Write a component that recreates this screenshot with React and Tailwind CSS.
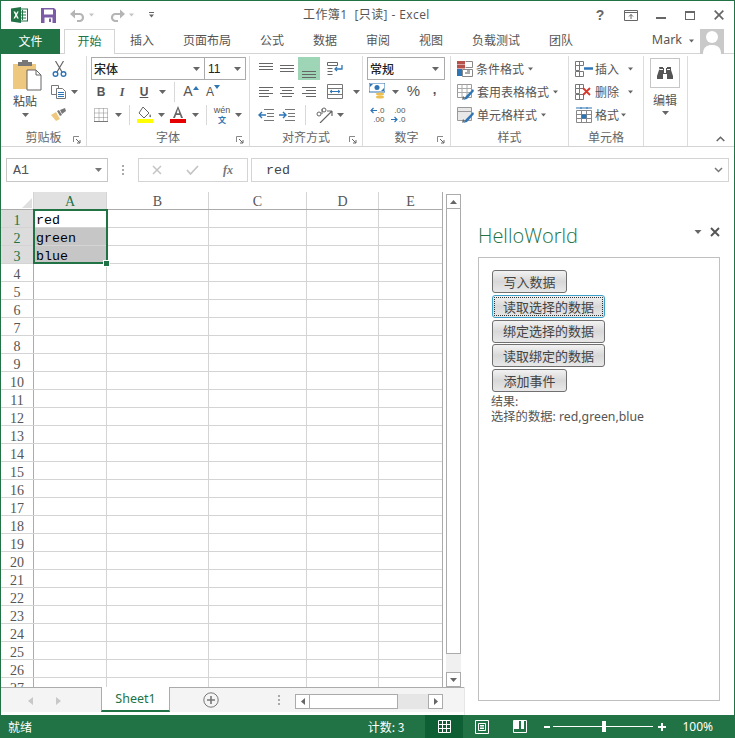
import React from "react";

const G = "#217346";
const Caret = ({ c = "#666", s = 7 }) => (
  <svg width={s} height="4" viewBox="0 0 7 4" className="shrink-0"><path d="M0 0h7L3.5 4z" fill={c} /></svg>
);
const Slot = ({ w, children, className = "" }) => (
  <div style={{ width: w }} className={`h-full flex items-center justify-center shrink-0 ${className}`}>{children}</div>
);
const Sep = () => <div className="w-px h-[20px] bg-[#d8d8d8] shrink-0" />;
const Lines = ({ rows, w = 16, h = 14, c = "#666" }) => (
  <svg width={w} height={h} viewBox={`0 0 ${w} ${h}`}>
    {rows.map(([x, y, l], i) => <rect key={i} x={x} y={y} width={l} height="1" fill={c} />)}
  </svg>
);
const Launcher = () => (
  <svg width="8" height="8" viewBox="0 0 8 8"><path d="M.5 6V.5H6" fill="none" stroke="#888" /><path d="M3 3l4 4M7 4v3H4" fill="none" stroke="#666" /></svg>
);
const Group = ({ w, label, launcher, children, border = true }) => (
  <div style={{ width: w }} className={`h-full relative shrink-0 flex flex-col ${border ? "border-r border-[#dcdcdc]" : ""}`}>
    <div className="h-[72px]">{children}</div>
    <div className="flex-1 flex items-center justify-center text-[12px] text-[#666]">{label}</div>
    {launcher && <div className="absolute right-[5px] bottom-[2px] flex"><Launcher /></div>}
  </div>
);
const Row = ({ children, className = "" }) => <div className={`h-[23px] flex items-center ${className}`}>{children}</div>;

const ExcelLogo = () => (
  <svg width="17" height="16" viewBox="0 0 17 16">
    <rect x="6" y="2" width="10.5" height="12" fill="#fff" stroke={G} />
    <path d="M9 5h6M9 8h6M9 11h6M11.5 3v10" stroke={G} />
    <path d="M0 1.5 10 0v16L0 14.5z" fill={G} />
    <path d="M2.5 4.5 4.3 8 2.5 11.5h1.6l1-2.2 1 2.2h1.7L6 8l1.7-3.5H6.2l-1 2.1-1-2.1z" fill="#fff" />
  </svg>
);
const SaveIcon = () => (
  <svg width="15" height="15" viewBox="0 0 15 15">
    <path d="M0 0h13l2 2v13H0z" fill="#7b5aa6" />
    <rect x="3" y="1.5" width="9" height="5" fill="#fff" />
    <rect x="3.5" y="9.5" width="8" height="5.5" fill="#fff" />
    <rect x="8" y="10.5" width="2" height="3.5" fill="#7b5aa6" />
  </svg>
);
const Undo = ({ flip }) => (
  <svg width="15" height="13" viewBox="0 0 15 13" style={flip ? { transform: "scaleX(-1)" } : undefined}>
    <path d="M3 5h6.5a3.5 3.5 0 0 1 0 7H7" fill="none" stroke="#b5b5b5" strokeWidth="2.2" />
    <path d="M0 5l5-4.5v9z" fill="#b5b5b5" />
  </svg>
);
const Paste = () => (
  <svg width="30" height="31" viewBox="0 0 30 31">
    <path d="M1 4h23v25H1z" fill="#edc87e" />
    <path d="M6 4V2h4V0h6v2h4v4H6z" fill="#777" />
    <path d="M15 13h9l5 5v15H15z" transform="translate(0 -3)" fill="#fff" stroke="#666" />
    <path d="M24 10v5h5" fill="none" stroke="#666" />
  </svg>
);
const Scissors = () => (
  <svg width="15" height="16" viewBox="0 0 15 16" fill="none">
    <path d="M3.5 0 10 11M11.5 0 5 11" stroke="#666" strokeWidth="1.2" />
    <circle cx="3.5" cy="13" r="2.3" stroke="#2e75b6" strokeWidth="1.4" />
    <circle cx="11.5" cy="13" r="2.3" stroke="#2e75b6" strokeWidth="1.4" />
  </svg>
);
const CopyI = () => (
  <svg width="16" height="14" viewBox="0 0 16 14" fill="#fff" stroke="#777">
    <path d="M.5.5h7v9h-7z" /><path d="M5.5 3.5h6l3 3v7h-9z" /><path d="M7 7.5h6M7 9.5h6M7 11.5h6" stroke="#2e75b6" />
  </svg>
);
const Brush = () => (
  <svg width="16" height="13" viewBox="0 0 16 13"><path d="M0 7l5-3 4 7-4 2z" fill="#edc87e" /><path d="M6 3l3 5 2-1-3-5zM9 2l2 4 4-3-1-3z" fill="#777" /></svg>
);
const BorderI = () => (
  <svg width="14" height="14" viewBox="0 0 14 14" fill="none" stroke="#888" strokeDasharray="1 1">
    <path d="M.5.5h13v13H.5zM.5 5h13M.5 9.5h13M5 .5v13M9.5.5v13" /><path d="M0 13.5h14" strokeDasharray="none" stroke="#777" />
  </svg>
);
const FillC = () => (
  <svg width="16" height="17" viewBox="0 0 16 17">
    <path d="M6 1l6 6-5 5-5-5z" fill="#fff" stroke="#666" /><path d="M13 8c1 1.5 1.5 2.5.5 3.2-1 .5-1.6-.7-.5-3.2z" fill="#666" />
    <rect y="13" width="16" height="4" fill="#ffff00" />
  </svg>
);
const FontC = () => (
  <svg width="16" height="17" viewBox="0 0 16 17">
    <path d="M8 0l5 12h-2l-1-3H6l-1 3H3zM8 3L6.7 7.3h2.6z" fill="#666" fillRule="evenodd" />
    <rect y="13" width="16" height="4" fill="#e60000" />
  </svg>
);
const Wrap = () => (
  <svg width="17" height="14" viewBox="0 0 17 14" fill="none" stroke="#666">
    <path d="M.5.5h10v3H.5zM.5 6.5h5M.5 9.5h5M.5 12.5h5" />
    <path d="M15 3v4h-7" stroke="#2e75b6" strokeWidth="1.3" /><path d="M10 5L8 7l2 2" stroke="#2e75b6" strokeWidth="1.3" />
  </svg>
);
const Merge = () => (
  <svg width="16" height="15" viewBox="0 0 16 15" fill="none" stroke="#777">
    <path d="M.5.5h15v14H.5zM.5 4.5h15M.5 10.5h15" /><path d="M3 7.5h10" stroke="#2e75b6" /><path d="M5 6L3 7.5 5 9M11 6l2 1.5L11 9" stroke="#2e75b6" />
  </svg>
);
const Indent = ({ rev }) => (
  <svg width="16" height="12" viewBox="0 0 16 12" fill="none">
    <path d="M6 .5h10M9 4.5h7M9 7.5h7M6 11.5h10" stroke="#777" />
    {rev ? <path d="M8 6H1M4 3L1 6l3 3" stroke="#2e75b6" strokeWidth="1.4" /> : <path d="M0 6h7M4 3l3 3-3 3" stroke="#2e75b6" strokeWidth="1.4" />}
  </svg>
);
const Orient = () => (
  <svg width="18" height="16" viewBox="0 0 18 16" fill="none" stroke="#666">
    <path d="M5 16 17 4M17 4h-5M17 4v5" strokeWidth="1.2" />
    <circle cx="4" cy="7" r="2" /><path d="M7 2v5" /><circle cx="9" cy="3" r="2" />
  </svg>
);
const Accounting = () => (
  <svg width="16" height="17" viewBox="0 0 16 17">
    <rect x="0" y="0" width="16" height="9" fill="#fff" stroke="#2e75b6" />
    <circle cx="8" cy="4.5" r="2.5" fill="#2e75b6" /><path d="M1 1h3L1 4zM15 8h-3l3-3z" fill="#2e75b6" />
    <ellipse cx="11" cy="11" rx="4" ry="1.5" fill="#edc050" /><ellipse cx="11" cy="14" rx="4" ry="1.5" fill="#edc050" />
  </svg>
);
const Arr = ({ rev }) => (
  <svg width="7" height="7" viewBox="0 0 7 7" fill="none" stroke="#2e75b6" strokeWidth="1.2">
    {rev ? <path d="M0 3.5h6M3.5 1 6 3.5 3.5 6" /> : <path d="M7 3.5H1M3.5 1 1 3.5 3.5 6" />}
  </svg>
);
const Dec = ({ a, b, rev }) => (
  <div className="flex flex-col items-end text-[8px] leading-[9px] text-[#555]" style={{ fontFamily: "'Liberation Sans',sans-serif" }}>
    <div className="flex items-center gap-[1px]">{rev ? null : <Arr />}<span>{a}</span></div>
    <div className="flex items-center gap-[1px]">{rev ? <Arr rev /> : null}<span>{b}</span></div>
  </div>
);
const TableIco = ({ kind }) => {
  if (kind === "cond")
    return (
      <svg width="16" height="16" viewBox="0 0 16 16">
        <rect x="0" y="0" width="8" height="3.5" fill="#b5504a" /><rect x="0" y="4" width="8" height="3.5" fill="#b5504a" /><rect x="0" y="8" width="5" height="7" fill="#2e75b6" />
        <path d="M8.5.5h7v6h-7" fill="#fff" stroke="#888" /><path d="M5.5 8.5h10v7h-10z" fill="#fff" stroke="#888" /><path d="M8 12h5M10 10h3" stroke="#555" />
      </svg>
    );
  return (
    <svg width="17" height="16" viewBox="0 0 17 16">
      <path d="M.5.5h14v13H.5z" fill={kind === "tbl" ? "#fff" : "#e8e8e8"} stroke="#999" />
      {kind === "tbl" && <path d="M.5 4.5h14M.5 8.5h14M5 .5v13M10 .5v13" stroke="#aaa" fill="none" />}
      {kind !== "tbl" && <path d="M.5 4.5h14" stroke="#999" />}
      <path d="M16 5 9 12l-2 3-1 1 4-1 7-8z" fill="#2e75b6" />
      <path d="M6 12l2 2-3 2z" fill="#666" />
    </svg>
  );
};
const CellIco = ({ kind }) => (
  <svg width="20" height="16" viewBox="0 0 20 16" fill="none">
    {kind !== "fmt" ? (
      <>
        <path d="M.5.5h8v4h-8zM.5 4.5h4v5h-4zM.5 10.5h8v5h-8zM4.5 10.5v5M4.5.5v4" stroke="#777" />
        {kind === "ins" ? <path d="M9 7.5h9" stroke="#2e75b6" strokeWidth="2.5" /> : <path d="M8 4l7 7M15 4l-7 7" stroke="#d8392b" strokeWidth="1.8" />}
      </>
    ) : (
      <>
        <path d="M1.5 3.5h15v12h-15zM1.5 7.5h15M1.5 11.5h15M6.5 3.5v12M11.5 3.5v12" stroke="#888" />
        <rect x="6.5" y="7.5" width="5" height="4" fill="#2e75b6" />
        <path d="M1 1h16M6 0v2M12 0v2" stroke="#2e75b6" />
      </>
    )}
  </svg>
);
const Binoc = () => (
  <svg width="16" height="14" viewBox="0 0 16 14" fill="#555">
    <path d="M2 1h4v1h1v3H6V3H3v2zM10 1h4v4h-1V3h-3v2H9V2h1z" />
    <path d="M2 4h5v3h2V4h5l2 6v3h-6V8H6v5H0v-3z" />
  </svg>
);

const tabs = ["插入", "页面布局", "公式", "数据", "审阅", "视图", "负载测试", "团队"];
const colW = [73, 102, 98, 72, 64];
const cols = ["A", "B", "C", "D", "E"];
const rows = Array.from({ length: 27 }, (_, i) => i + 1);
const mono = { fontFamily: "'Liberation Mono','Noto Sans CJK SC',monospace" };
const serif = { fontFamily: "'Liberation Serif',serif" };
const btns = [["写入数据", 75], ["读取选择的数据", 113, true], ["绑定选择的数据", 113], ["读取绑定的数据", 113], ["添加事件", 75]];

export default function App() {
  return (
    <div className="w-[735px] h-[738px] bg-white flex flex-col overflow-hidden border-x border-t border-[#217346] text-[12px] text-[#444]" style={{ fontFamily: "'Noto Sans CJK SC','Noto Sans',sans-serif" }}>
      {/* title bar */}
      <div className="h-[28px] flex items-center shrink-0">
        <div className="w-[302px] flex items-center h-full shrink-0">
          <Slot w={36}><ExcelLogo /></Slot>
          <Slot w={4}></Slot>
          <div className="w-[15px] flex"><SaveIcon /></div>
          <div className="w-[14px]" />
          <Undo />
          <div className="w-[4px]" />
          <Caret c="#c4c4c4" s={5} />
          <div className="w-[16px]" />
          <Undo flip />
          <div className="w-[4px]" />
          <Caret c="#c4c4c4" s={5} />
          <div className="w-[15px]" />
          <div className="flex flex-col items-center gap-[1px]"><div className="w-[5px] h-px bg-[#666]" /><Caret c="#666" s={5} /></div>
        </div>
        <div className="text-[12px] text-[#555] whitespace-pre tracking-[0.4px]" style={{ fontFamily: "'Open Sans','Noto Sans CJK SC',sans-serif" }}>工作簿1  [只读] - Excel</div>
        <div className="ml-auto flex items-center h-full text-[#666]">
          <Slot w={30}><span className="text-[14px] font-bold" style={{ fontFamily: "'Liberation Sans',sans-serif" }}>?</span></Slot>
          <Slot w={31}>
            <svg width="14" height="11" viewBox="0 0 14 11" fill="none" stroke="#666"><path d="M.5.5h13v10H.5zM.5 2.5h13M7 9V4.5M5 6.5l2-2 2 2" /></svg>
          </Slot>
          <Slot w={29}><div className="w-[10px] h-[2px] bg-[#666] mt-[6px]" /></Slot>
          <Slot w={29}><div className="w-[10px] h-[9px] border border-t-2 border-[#666]" /></Slot>
          <Slot w={30}>
            <svg width="10" height="10" viewBox="0 0 10 10"><path d="M.7.7l8.6 8.6M9.3.7L.7 9.3" stroke="#666" strokeWidth="1.7" /></svg>
          </Slot>
        </div>
      </div>
      {/* tabs */}
      <div className="h-[25px] flex shrink-0 border-b border-[#d4d4d4] relative">
        <div className="w-[59px] bg-[#217346] text-white flex items-center justify-center shrink-0 -mb-px pb-[2px]">文件</div>
        <div className="w-[4px] shrink-0" />
        <div className="w-[51px] h-[25px] border border-b-0 border-[#d4d4d4] bg-white text-[#217346] flex items-center justify-center shrink-0 relative z-10 pb-[2px]">开始</div>
        <div className="flex items-center gap-[29px] ml-[15px] pb-[2px]">
          {tabs.map((t) => (
            <div key={t} className="whitespace-nowrap text-[#555]">{t}</div>
          ))}
        </div>
        <div className="ml-auto flex items-center h-full">
          <span className="text-[12.5px] text-[#555] mr-[7px] pb-[2px]" style={{ fontFamily: "'Noto Sans',sans-serif" }}>Mark</span>
          <Caret c="#666" s={5} />
          <div className="w-[24px] h-[25px] ml-[6px] mr-[10px] bg-[#c9c9c9] flex flex-col items-center overflow-hidden relative">
            <svg width="24" height="25" viewBox="0 0 24 25"><circle cx="12" cy="8" r="6" fill="#fff" /><path d="M3 25c0-7 4-9 9-9s9 2 9 9z" fill="#fff" /></svg>
          </div>
        </div>
      </div>
      {/* ribbon */}
      <div className="h-[93px] flex shrink-0 border-b border-[#d4d4d4] pt-[2px] text-[#444] relative">
        <Group w={86} label="剪贴板" launcher>
          <div className="flex h-full">
            <div className="w-[48px] flex flex-col items-center pt-[4px]">
              <div className="pl-[3px]"><Paste /></div>
              <div className="mt-[2px] leading-[16px]">粘贴</div>
              <div className="mt-[4px]"><Caret /></div>
            </div>
            <div className="flex flex-col pt-[1px]">
              <Row><Slot w={20}><Scissors /></Slot></Row>
              <Row><Slot w={20}><CopyI /></Slot><div className="w-[2px]" /><Caret /></Row>
              <Row><Slot w={20}><Brush /></Slot></Row>
            </div>
          </div>
        </Group>
        <Group w={163} label="字体" launcher>
          <div className="pl-[4px] pt-[1px] flex flex-col">
            <Row>
              <div className="w-[114px] h-[23px] border border-[#ababab] flex items-center justify-between pl-[2px] pr-[4px] text-[#222] font-medium" style={{ fontFamily: "'Noto Sans CJK SC',serif" }}>宋体<Caret /></div>
              <div className="w-[41px] h-[23px] border border-l-0 border-[#ababab] flex items-center justify-between pl-[3px] pr-[4px] text-[#222]" style={{ fontFamily: "'Liberation Sans',sans-serif" }}>11<Caret /></div>
            </Row>
            <div className="h-[23px] flex items-center text-[#555]" style={{ fontFamily: "'Liberation Sans',sans-serif" }}>
              <Slot w={20}><b className="text-[12px]">B</b></Slot>
              <Slot w={22}><i className="text-[12px] font-bold" style={serif}>I</i></Slot>
              <Slot w={22}><b className="text-[12px] underline">U</b></Slot>
              <Slot w={14}><Caret /></Slot>
              <Slot w={11}><Sep /></Slot>
              <Slot w={22}><span className="text-[14px] font-medium">A</span><span className="-mt-[8px] flex"><svg width="6" height="4" viewBox="0 0 6 4"><path d="M0 4h6L3 0z" fill="#2e75b6" /></svg></span></Slot>
              <Slot w={22}><span className="text-[12px] font-medium">A</span><span className="-mt-[10px] flex"><svg width="6" height="4" viewBox="0 0 6 4"><path d="M0 0h6L3 4z" fill="#2e75b6" /></svg></span></Slot>
            </div>
            <div className="h-[23px] flex items-center">
              <Slot w={20}><BorderI /></Slot>
              <Slot w={14}><Caret /></Slot>
              <Slot w={8}><Sep /></Slot>
              <Slot w={24}><FillC /></Slot>
              <Slot w={8}><Caret /></Slot>
              <Slot w={26}><FontC /></Slot>
              <Slot w={8}><Caret /></Slot>
              <Slot w={14}><Sep /></Slot>
              <div className="w-[18px] flex flex-col items-center">
                <span className="text-[9px] leading-[10px] text-[#555]" style={{ fontFamily: "'Liberation Sans',sans-serif" }}>wén</span>
                <span className="text-[8px] leading-[10px] text-[#2e75b6] font-bold">文</span>
              </div>
              <Slot w={14}><Caret /></Slot>
            </div>
          </div>
        </Group>
        <Group w={113} label="对齐方式" launcher>
          <div className="pl-[5px] pt-[1px] flex flex-col">
            <Row>
              <Slot w={21}><Lines rows={[[1, 1, 14], [1, 4, 14], [1, 7, 14]]} /></Slot>
              <Slot w={22}><Lines rows={[[1, 3, 14], [1, 6, 14], [1, 9, 14]]} /></Slot>
              <div className="w-[22px] h-[23px] bg-[#9fd5b7] flex items-end justify-center pb-[2px]"><Lines rows={[[1, 7, 14], [1, 10, 14], [1, 13, 14]]} /></div>
              <Slot w={30}><Wrap /></Slot>
            </Row>
            <Row>
              <Slot w={21}><Lines rows={[[1, 2, 14], [1, 5, 10], [1, 8, 14], [1, 11, 10]]} /></Slot>
              <Slot w={22}><Lines rows={[[1, 2, 14], [3, 5, 10], [1, 8, 14], [3, 11, 10]]} /></Slot>
              <Slot w={22}><Lines rows={[[1, 2, 14], [5, 5, 10], [1, 8, 14], [5, 11, 10]]} /></Slot>
              <Slot w={30}><Merge /></Slot>
              <Slot w={12}><Caret /></Slot>
            </Row>
            <Row>
              <Slot w={21}><Indent rev /></Slot>
              <Slot w={22}><Indent /></Slot>
              <Slot w={14}><Sep /></Slot>
              <Slot w={24}><Orient /></Slot>
              <Slot w={8}><Caret /></Slot>
            </Row>
          </div>
        </Group>
        <Group w={88} label="数字" launcher>
          <div className="pl-[4px] pt-[1px] flex flex-col">
            <Row><div className="w-[78px] h-[23px] border border-[#ababab] flex items-center justify-between pl-[2px] pr-[5px] text-[#222] font-medium">常规<Caret /></div></Row>
            <div className="h-[23px] flex items-center">
              <Slot w={20}><Accounting /></Slot>
              <Slot w={16}><Caret /></Slot>
              <Slot w={21}><span className="text-[15px] text-[#555]" style={{ fontFamily: "'Liberation Sans',sans-serif" }}>%</span></Slot>
              <Slot w={21}><b className="text-[13px] text-[#555] -mt-[4px]" style={{ fontFamily: "'Liberation Sans',sans-serif" }}>,</b></Slot>
            </div>
            <div className="h-[23px] flex items-center">
              <Slot w={20}><Dec a=".0" b=".00" /></Slot>
              <Slot w={22}><Dec a=".00" b=".0" rev /></Slot>
            </div>
          </div>
        </Group>
        <Group w={118} label="样式">
          <div className="pl-[6px] pt-[1px] flex flex-col text-[#555]">
            <Row className="gap-[3px]"><TableIco kind="cond" />条件格式<span className="ml-[1px]"><Caret s={5} /></span></Row>
            <Row className="gap-[3px]"><TableIco kind="tbl" />套用表格格式<span className="ml-[1px]"><Caret s={5} /></span></Row>
            <Row className="gap-[3px]"><TableIco kind="cell" />单元格样式<span className="ml-[1px]"><Caret s={5} /></span></Row>
          </div>
        </Group>
        <Group w={75} label="单元格">
          <div className="pl-[6px] pt-[1px] flex flex-col text-[#555]">
            <Row><CellIco kind="ins" />插入<span className="ml-[9px]"><Caret s={5} /></span></Row>
            <Row><CellIco kind="del" />删除<span className="ml-[9px]"><Caret s={5} /></span></Row>
            <Row><CellIco kind="fmt" />格式<span className="ml-[2px]"><Caret s={5} /></span></Row>
          </div>
        </Group>
        <Group w={44} label="">
          <div className="flex flex-col items-center pt-[2px] pr-[1px] text-[#555]">
            <div className="w-[30px] h-[30px] border border-[#c6c6c6] flex items-center justify-center"><Binoc /></div>
            <div className="mt-[2px] leading-[20px]">编辑</div>
            <div className="mt-[1px]"><Caret /></div>
          </div>
        </Group>
        <div className="absolute right-[9px] bottom-[4px] flex">
          <svg width="9" height="6" viewBox="0 0 9 6"><path d="M.7 5 4.5 1.2 8.3 5" fill="none" stroke="#666" strokeWidth="1.5" /></svg>
        </div>
      </div>
      {/* formula bar */}
      <div className="h-[45px] flex items-center shrink-0 pl-[5px] pr-[5px]" style={mono}>
        <div className="w-[102px] h-[24px] border border-[#c6c6c6] flex items-center justify-between pl-[6px] pr-[5px] text-[#555] text-[13.33px]"><span className="pt-[2px]">A1</span><Caret c="#777" /></div>
        <div className="w-[30px] flex flex-col items-center gap-[2px]">
          <div className="w-[2px] h-[2px] bg-[#aaa]" /><div className="w-[2px] h-[2px] bg-[#aaa]" /><div className="w-[2px] h-[2px] bg-[#aaa]" />
        </div>
        <div className="w-[110px] h-[24px] border border-[#d4d4d4] flex items-center pl-[13px] gap-[24px]">
          <svg width="10" height="10" viewBox="0 0 10 10"><path d="M1 1l8 8M9 1l-8 8" stroke="#c4c4c4" strokeWidth="1.5" /></svg>
          <svg width="13" height="10" viewBox="0 0 13 10"><path d="M1 5l3.5 4L12 1" fill="none" stroke="#c4c4c4" strokeWidth="1.7" /></svg>
          <i className="text-[12px] text-[#777] font-bold" style={serif}>fx</i>
        </div>
        <div className="w-[3px]" />
        <div className="flex-1 h-[24px] border border-[#d4d4d4] flex items-center justify-between pl-[14px] pr-[5px] text-[#444] text-[13.33px]">
          <span className="pt-[2px]">red</span>
          <svg width="9" height="6" viewBox="0 0 9 6"><path d="M1 1l3.5 3.5L8 1" fill="none" stroke="#777" strokeWidth="1.5" /></svg>
        </div>
      </div>
      {/* main */}
      <div className="flex-1 flex min-h-0">
        <div className="w-[464px] shrink-0 border-r border-[#e6e6e6] flex flex-col">
          <div className="flex-1 flex min-h-0">
            {/* sheet */}
            <div className="w-[442px] shrink-0 h-[495px] overflow-hidden relative border-r border-[#ababab]" style={mono}>
              <div className="flex h-[18px] border-b border-[#ababab]">
                <div className="w-[33px] shrink-0 border-r border-[#d4d4d4] flex items-end justify-end pr-[1px] pb-[1px]">
                  <svg width="10" height="10" viewBox="0 0 10 10"><path d="M10 0v10H0z" fill="#dfdfdf" /></svg>
                </div>
                {cols.map((c, i) => (
                  <div key={c} style={{ width: colW[i], ...serif }} className={`shrink-0 border-r border-[#d4d4d4] flex items-center justify-center text-[14px] pt-[1px] ${i === 0 ? "bg-[#e1e1e1] text-[#217346]" : "text-[#555]"}`}>{c}</div>
                ))}
              </div>
              {rows.map((r) => (
                <div key={r} className="flex h-[18px] border-b border-[#d4d4d4]">
                  <div style={serif} className={`w-[33px] shrink-0 border-r border-[#ababab] flex items-end justify-center text-[14px] leading-[12px] ${r <= 3 ? "bg-[#dcdcdc] text-[#217346]" : "text-[#555]"}`}>{r}</div>
                  {cols.map((c, i) => (
                    <div key={c} style={{ width: colW[i] }} className={`shrink-0 border-r border-[#d4d4d4] flex items-end pl-[2px] text-[13.33px] leading-[12px] text-black ${i === 0 && (r === 2 || r === 3) ? "bg-[#c6c6c6]" : ""}`}>
                      {i === 0 && r === 1 ? "red" : i === 0 && r === 2 ? "green" : i === 0 && r === 3 ? "blue" : ""}
                    </div>
                  ))}
                </div>
              ))}
              {/* selection overlay */}
              <div className="absolute left-[32px] top-[17px] w-[75px] h-[55px] border-2 border-[#217346]" />
              <div className="absolute left-[102px] top-[68px] w-[5px] h-[5px] bg-[#217346] border border-white box-content" />
            </div>
            {/* v scrollbar */}
            <div className="w-[22px] shrink-0 h-[495px] flex flex-col pl-[3px] pt-[2px] bg-white">
              <div className="w-[15px] flex flex-col h-full bg-[#f0f0f0]">
                <div className="h-[15px] bg-white border border-[#ababab] flex items-center justify-center shrink-0"><svg width="7" height="4" viewBox="0 0 7 4"><path d="M0 4h7L3.5 0z" fill="#666" /></svg></div>
                <div className="h-[445px] bg-white border-x border-b border-[#ababab] shrink-0" />
                <div className="flex-1" />
                <div className="h-[15px] bg-white border border-[#ababab] flex items-center justify-center shrink-0"><Caret /></div>
              </div>
            </div>
          </div>
          {/* sheet tabs */}
          <div className="h-[25px] shrink-0 flex bg-[#f4f4f4] border-t border-[#ababab] relative">
            <div className="w-[26px]" />
            <Slot w={6} className="pt-[1px]"><svg width="5" height="8" viewBox="0 0 5 8"><path d="M5 0v8L0 4z" fill="#c8c8c8" /></svg></Slot>
            <div className="w-[22px]" />
            <Slot w={6} className="pt-[1px]"><svg width="5" height="8" viewBox="0 0 5 8"><path d="M0 0v8l5-4z" fill="#c8c8c8" /></svg></Slot>
            <div className="w-[40px]" />
            <div className="w-[69px] h-[25px] -mt-px bg-white border-x border-[#ababab] border-b-2 border-b-[#217346] flex items-center justify-center text-[12.5px] text-[#217346] relative pt-[2px]" style={{ fontFamily: "'Noto Sans',sans-serif" }}>Sheet1</div>
            <Slot w={81}>
              <svg width="16" height="16" viewBox="0 0 16 16" fill="none" stroke="#777"><circle cx="8" cy="8" r="7.2" /><path d="M8 4v8M4 8h8" strokeWidth="1.6" /></svg>
            </Slot>
            <div className="w-[22px]" />
            <div className="w-[12px] flex flex-col items-center justify-center gap-[2px]">
              <div className="w-[2px] h-[2px] bg-[#aaa]" /><div className="w-[2px] h-[2px] bg-[#aaa]" /><div className="w-[2px] h-[2px] bg-[#aaa]" />
            </div>
            <div className="w-[10px]" />
            <div className="w-[148px] h-[15px] mt-[6px] flex bg-[#e6e6e6]">
              <div className="w-[15px] h-full bg-white border border-[#ababab] flex items-center justify-center"><svg width="4" height="7" viewBox="0 0 4 7"><path d="M4 0v7L0 3.5z" fill="#666" /></svg></div>
              <div className="w-[88px] h-full bg-white border-y border-r border-[#ababab]" />
              <div className="flex-1" />
              <div className="w-[15px] h-full bg-white border border-[#ababab] flex items-center justify-center"><svg width="4" height="7" viewBox="0 0 4 7"><path d="M0 0v7l4-3.5z" fill="#666" /></svg></div>
            </div>
          </div>
          <div className="h-[3px] shrink-0" />
        </div>
        {/* pane */}
        <div className="flex-1 flex flex-col pl-[13px] pr-[14px] pt-[27px] pb-[14px] min-w-0">
          <div className="flex items-center justify-between h-[34px] mb-[4px] shrink-0">
            <span className="text-[20px] font-light text-[#217346]" style={{ fontFamily: "'Open Sans','Noto Sans',sans-serif" }}>HelloWorld</span>
            <div className="flex items-center gap-[7px] -mt-[8px]">
              <Caret c="#666" s={10} />
              <svg width="10" height="10" viewBox="0 0 10 10"><path d="M1 1l8 8M9 1l-8 8" stroke="#555" strokeWidth="1.9" /></svg>
            </div>
          </div>
          <div className="flex-1 border border-[#c0c0c0] pl-[13px] pt-[12px] flex flex-col items-start">
            {btns.map(([t, w, focus]) => (
              <div key={t} style={{ width: w }} className={`h-[23px] mb-[1.75px] rounded-[3px] border flex items-center justify-center text-[13px] text-[#444] ${focus ? "border-[#3c9fc9] outline-1 outline-dotted -outline-offset-3 outline-[#333]" : "border-[#707070]"} bg-gradient-to-b from-[#f2f2f2] via-[#d8d8d8] to-[#e8e8e8]`}>{t}</div>
            ))}
            <div className="-ml-px -mt-[1px] leading-[16px] text-[12px] text-[#555]">结果:</div>
            <div className="-ml-px leading-[16px] text-[12.3px] text-[#555]" style={{ fontFamily: "'Noto Sans','Noto Sans CJK SC',sans-serif" }}>选择的数据: red,green,blue</div>
          </div>
        </div>
      </div>
      {/* status */}
      <div className="h-[23px] shrink-0 -mx-px bg-[#217346] text-white flex items-center text-[12px]">
        <div className="pl-[8px]">就绪</div>
        <div className="ml-auto flex items-center h-full">
          <span className="whitespace-nowrap mr-[21px]">计数: 3</span>
          <div className="w-[38px] h-full bg-[#0f5f35] flex items-center justify-center">
            <svg width="13" height="13" viewBox="0 0 13 13" fill="none" stroke="#fff"><path d="M.5.5h12v12H.5zM.5 4.5h12M.5 8.5h12M4.5.5v12M8.5.5v12" /></svg>
          </div>
          <Slot w={38}>
            <svg width="14" height="14" viewBox="0 0 14 14" fill="none" stroke="#fff"><path d="M.5.5h13v13H.5zM3.5 3.5h7v7h-7zM5 5.5h4M5 7h4M5 8.5h4" /></svg>
          </Slot>
          <Slot w={38}>
            <svg width="14" height="13" viewBox="0 0 14 13"><path d="M.5.5h13v12H.5z" fill="none" stroke="#fff" /><path d="M1 1h5v8H1zM8 1h3v8H8z" fill="#fff" /></svg>
          </Slot>
          <div className="w-[5px]" />
          <div className="w-[6px] h-[2px] bg-white mr-[2px]" />
          <div className="w-[100px] h-px bg-white relative mx-[1px]"><div className="absolute left-[49px] -top-[5px] w-[4px] h-[11px] bg-white" /></div>
          <div className="ml-[4px] w-[8px] h-[8px] relative"><div className="absolute top-[3px] left-0 w-[8px] h-[2px] bg-white" /><div className="absolute left-[3px] top-0 w-[2px] h-[8px] bg-white" /></div>
          <span className="ml-[16px] mr-[22px]" style={{ fontFamily: "'Noto Sans',sans-serif" }}>100%</span>
        </div>
      </div>
    </div>
  );
}
